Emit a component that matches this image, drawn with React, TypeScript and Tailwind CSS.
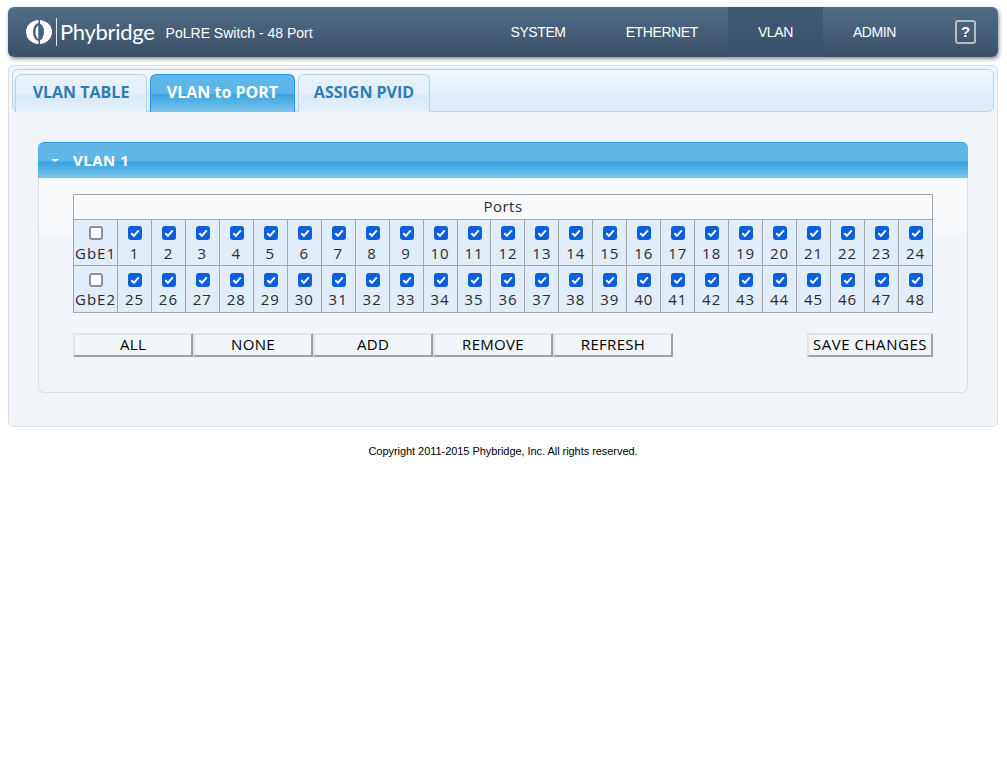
import { useState } from "react";

const ui = "font-['Open_Sans','DejaVu_Sans',sans-serif]";
const row1 = Array.from({ length: 24 }, (_, i) => i + 1);
const row2 = Array.from({ length: 24 }, (_, i) => i + 25);

function Logo() {
  return (
    <div className="flex items-center">
      <svg width="26" height="24" viewBox="0 0 26 24" className="mr-[4px]">
        <ellipse cx="13" cy="12" rx="13" ry="12" fill="#fff" />
        <ellipse cx="12.500" cy="12" rx="5.500" ry="9" fill="#46607b" />
        <path d="M12.500 4.500 C10 7 9.500 9.500 9.500 12 C9.500 14.500 10 17 12.500 19.500 Z" fill="#fff" />
        <rect x="12.500" y="0" width="1.500" height="24" fill="#46607b" />
      </svg>
      <div className="h-[28px] w-px bg-[#dfe6ec]" />
      <span className="ml-[3px] font-['Lato',sans-serif] text-[22px] font-normal leading-none tracking-[-0.3px] text-white">Phybridge</span>
    </div>
  );
}

function NavItem({ label, active }: { label: string; active?: boolean }) {
  return (
    <div
      className={`flex h-full items-center justify-center px-[30px] pt-[1px] text-[14px] tracking-[-0.4px] text-white ${
        active ? "bg-gradient-to-b from-[#405a75] to-[#3a526c]" : ""
      }`}
    >
      {label}
    </div>
  );
}

function Tab({ label, active, width }: { label: string; active?: boolean; width: string }) {
  return (
    <div
      className={`-mb-px flex h-[38px] items-center justify-center rounded-t-[6px] border border-b-0 pb-[4px] text-[16px] font-bold ${width} ${
        active
          ? "border-[#2b93e3] bg-[linear-gradient(#62b8e8_0%,#5ab3e7_50%,#38a4e1_52%,#7cc5ec_100%)] text-white"
          : "border-[#b6d3ec] bg-[linear-gradient(#e6f1fb_0%,#e3effa_50%,#d9e9f7_55%,#e3f0fb_100%)] text-[#2e7cb5]"
      }`}
    >
      {label}
    </div>
  );
}

function PortBox({ checked, label, second }: { checked: boolean; label: string | number; second?: boolean }) {
  const [on, setOn] = useState(checked);
  return (
    <td className="border border-[#a6a6a6] bg-[#e1edf8] p-0 text-center">
      <label className={`flex flex-col items-center ${second ? "h-[46px] pt-[7px]" : "h-[45px] pt-[6px]"}`}>
        <span className={`relative block h-[14px] w-[14px] ${typeof label === "number" ? "ml-[1px]" : ""}`}>
          <input
            type="checkbox"
            checked={on}
            onChange={(e) => setOn(e.target.checked)}
            className="peer block h-[14px] w-[14px] appearance-none rounded-[3px] border-2 border-[#8f8f9d] bg-white checked:border-[#0a5fdc] checked:bg-[#0a5fdc]"
          />
          <svg viewBox="0 0 14 14" className="pointer-events-none absolute inset-0 hidden peer-checked:block">
            <path d="M3.300 7.300 L5.900 9.800 L10.800 4.400" fill="none" stroke="#fff" strokeWidth="2" />
          </svg>
        </span>
        <span className={`whitespace-nowrap text-[15px] leading-[20px] tracking-[1px] text-[#2a2a36] ${second ? "mt-[2px]" : "mt-[3px]"}`}>
          {label}
        </span>
      </label>
    </td>
  );
}

function Btn({ label, className }: { label: string; className: string }) {
  return (
    <button
      type="button"
      className={`h-[24px] border-2 border-t-[#e3e3e3] border-l-[#e3e3e3] border-r-[#a0a0a0] border-b-[#a0a0a0] bg-[#f1f4f8] p-0 pb-[2px] text-[15px] leading-none text-black ${className}`}
    >
      {label}
    </button>
  );
}

export default function App() {
  return (
    <div className={`min-h-[770px] bg-white pl-2 pr-[9px] pt-[7px] ${ui}`}>
      <header className="flex h-[50px] items-center rounded-[6px] bg-[linear-gradient(#516d87,#39506a)] shadow-[1px_2px_4px_rgba(0,0,0,0.45)] font-['Liberation_Sans',sans-serif]">
        <div className="ml-[18px]">
          <Logo />
        </div>
        <span className="ml-[11px] mt-[2px] text-[14px] text-white">PoLRE Switch - 48 Port</span>
        <nav className="ml-auto flex h-full">
          <NavItem label="SYSTEM" />
          <NavItem label="ETHERNET" />
          <NavItem label="VLAN" active />
          <NavItem label="ADMIN" />
        </nav>
        <div className="ml-[29px] mr-[22px] flex h-[24px] w-[21px] items-center justify-center rounded-[3px] border-2 border-[#b5bdc5] text-[15px] font-bold text-white">
          ?
        </div>
      </header>

      <main className="mt-[8px] h-[362px] rounded-[5px] border border-[#dddfe2] bg-[#f1f4f8] p-[3px]">
        <div className="flex h-[43px] items-end gap-[3px] rounded-[6px] border border-[#b9d5ee] bg-[linear-gradient(#f4f8fc_0%,#e0edf8_60%,#dfecf8_100%)] pl-[2px]">
          <Tab label="VLAN TABLE" width="w-[132px]" />
          <Tab label="VLAN to PORT" width="w-[145px]" active />
          <Tab label="ASSIGN PVID" width="w-[132px]" />
        </div>

        <section className="mx-[26px] mt-[30px]">
          <div className="flex h-[36px] items-center rounded-t-[6px] border-t border-[#2b93e3] bg-[linear-gradient(#62b8e8_0%,#5fb6e8_50%,#38a4e1_55%,#7cc5ec_100%)]">
            <span className="ml-[13px] h-0 w-0 border-x-[4px] border-t-[3px] border-x-transparent border-t-white" />
            <span className="ml-[14px] text-[15px] font-bold tracking-[0.5px] text-white">VLAN 1</span>
          </div>
          <div className="h-[215px] rounded-b-[6px] border border-t-0 border-[#dddfe2] bg-[linear-gradient(#f9fafc_0%,#f9fafc_22%,#f1f4f8_30%)] px-[34px] pt-[16px]">
            <table className="w-[860px] table-fixed border-collapse">
              <colgroup>
                <col className="w-[44px]" />
                {row1.map((n) => (
                  <col key={n} />
                ))}
              </colgroup>
              <tbody>
                <tr>
                  <td colSpan={25} className="h-[25px] border border-[#a6a6a6] p-0 pb-[2px] text-center text-[15px] leading-none tracking-[0.5px] text-[#2a2a36]">
                    Ports
                  </td>
                </tr>
                <tr>
                  <PortBox checked={false} label="GbE1" />
                  {row1.map((n) => (
                    <PortBox key={n} checked label={n} />
                  ))}
                </tr>
                <tr>
                  <PortBox checked={false} label="GbE2" second />
                  {row2.map((n) => (
                    <PortBox key={n} checked label={n} second />
                  ))}
                </tr>
              </tbody>
            </table>
            <div className="mt-[20px] flex w-[860px]">
              <Btn label="ALL" className="w-[120px] tracking-[0.3px]" />
              <Btn label="NONE" className="w-[120px] tracking-[0.3px]" />
              <Btn label="ADD" className="w-[120px] tracking-[0.3px]" />
              <Btn label="REMOVE" className="w-[120px] tracking-[0.3px]" />
              <Btn label="REFRESH" className="w-[120px] tracking-[0.3px]" />
              <Btn label="SAVE CHANGES" className="ml-auto w-[126px] tracking-[0.55px]" />
            </div>
          </div>
        </section>
      </main>

      <footer className="mt-[18px] text-center font-['Liberation_Sans',sans-serif] text-[11px] leading-[12px] tracking-[-0.05px] text-black">
        Copyright 2011-2015 Phybridge, Inc. All rights reserved.
      </footer>
    </div>
  );
}
